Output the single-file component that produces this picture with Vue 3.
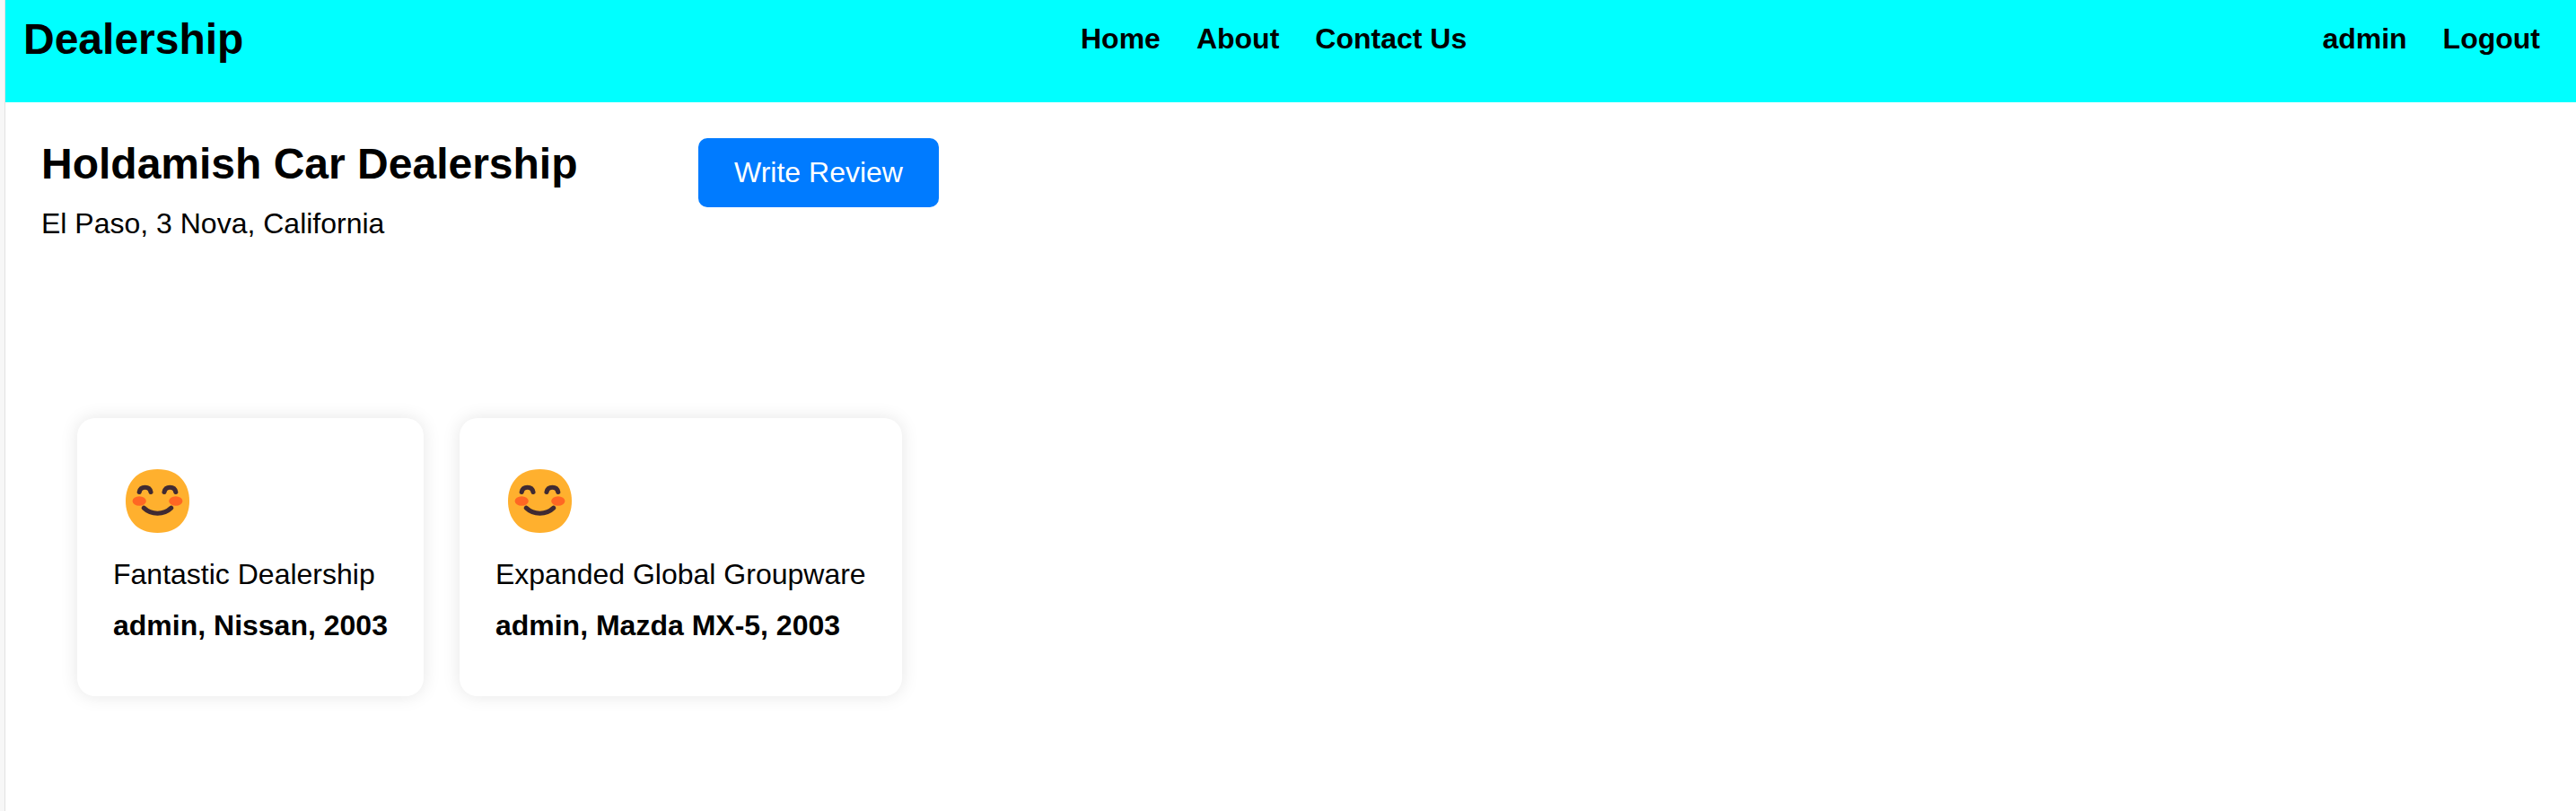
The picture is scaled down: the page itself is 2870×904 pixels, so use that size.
<script setup>
const links = ['Home', 'About', 'Contact Us']
const account = ['admin', 'Logout']
const reviews = [
  { text: 'Fantastic Dealership', by: 'admin, Nissan, 2003' },
  { text: 'Expanded Global Groupware', by: 'admin, Mazda MX-5, 2003' },
]
</script>

<template>
  <div class="page">
    <header class="bar">
      <h1 class="brand">Dealership</h1>
      <nav class="links">
        <a v-for="l in links" :key="l">{{ l }}</a>
      </nav>
      <nav class="links account">
        <a v-for="a in account" :key="a">{{ a }}</a>
      </nav>
    </header>

    <section class="dealer">
      <div class="info">
        <h2 class="name">Holdamish Car Dealership</h2>
        <p class="address">El Paso, 3 Nova, California</p>
      </div>
      <button class="write" type="button">Write Review</button>
    </section>

    <section class="reviews">
      <article v-for="r in reviews" :key="r.text" class="card">
        <svg class="face" viewBox="0 0 71 71" aria-hidden="true">
          <path fill="#ffb02e" d="M35.5 71C59.2 71 71 55.1 71 35.5S59.2 0 35.5 0 0 15.9 0 35.5 11.8 71 35.5 71Z" />
          <ellipse cx="15.2" cy="35.5" rx="7.6" ry="5.2" fill="#ff6723" />
          <ellipse cx="55.8" cy="35.5" rx="7.6" ry="5.2" fill="#ff6723" />
          <g fill="none" stroke="#402a32" stroke-width="5.1" stroke-linecap="round" stroke-linejoin="round">
            <path d="M15.2 25.5C15.8 22.4 18.2 20.3 21.6 20.3S27.4 22.4 28 25.5" />
            <path d="M43 25.5C43.6 22.4 46 20.3 49.4 20.3S55.2 22.4 55.8 25.5" />
            <path d="M20.2 43.2C28.5 51.2 42.5 51.2 50.8 43.2" />
          </g>
        </svg>
        <p class="text">{{ r.text }}</p>
        <p class="by">{{ r.by }}</p>
      </article>
    </section>
  </div>
</template>

<style>
body {
  margin: 0;
  background: #fff;
}
</style>

<style scoped>
.page {
  box-sizing: border-box;
  height: 904px;
  border-left: 5px solid #f7f7f7;
  box-shadow: inset 1px 0 #e2e2e2;
  padding-left: 1px;
  overflow: hidden;
  color: #000;
  font: 32px/36px "Liberation Sans", Arial, sans-serif;
}
h1, h2, p {
  margin: 0;
}
.bar {
  box-sizing: border-box;
  height: 114px;
  padding: 16px 40px 0 20px;
  display: flex;
  align-items: flex-start;
  background: #00ffff;
}
.brand {
  width: 1178px;
  font-size: 48px;
  line-height: 55px;
}
.links {
  display: flex;
  gap: 40px;
  padding-top: 9px;
  font-weight: bold;
}
.account {
  margin-left: auto;
}
.dealer {
  display: flex;
  align-items: flex-start;
  padding: 40px 40px 0;
}
.info {
  width: 732px;
}
.name {
  font-size: 48px;
  line-height: 57px;
}
.address {
  margin-top: 20px;
}
.write {
  width: 268px;
  height: 77px;
  padding: 0 0 1px;
  border: 0;
  border-radius: 10px;
  background: #007bff;
  color: #fff;
  font: inherit;
}
.reviews {
  display: flex;
  align-items: flex-start;
  gap: 40px;
  padding: 199px 80px 0;
}
.card {
  box-sizing: border-box;
  height: 310px;
  padding: 57px 40px 0;
  border-radius: 20px;
  background: #fff;
  box-shadow: 0 0 20px rgba(0, 0, 0, 0.1);
}
.face {
  display: block;
  width: 71px;
  height: 71px;
  margin-left: 14px;
}
.text {
  margin-top: 28px;
}
.by {
  margin-top: 21px;
  font-weight: bold;
}
</style>
